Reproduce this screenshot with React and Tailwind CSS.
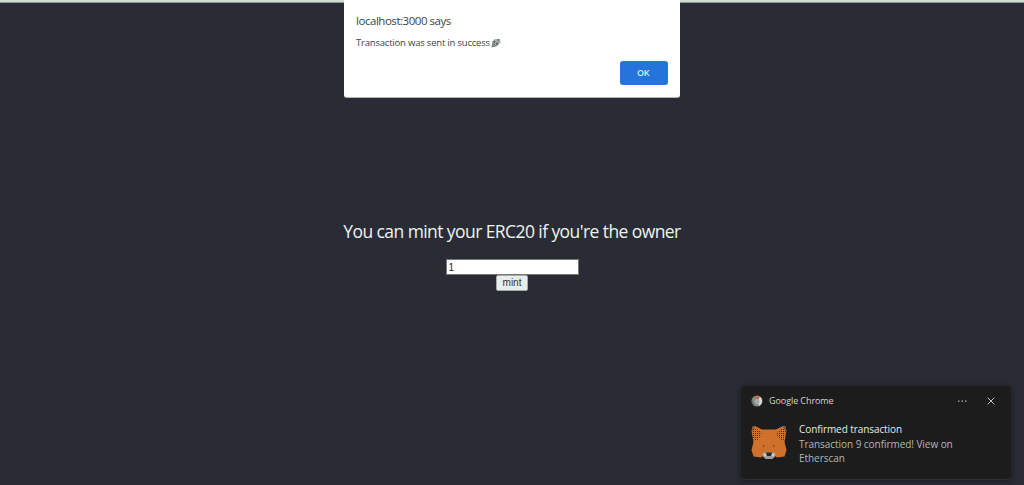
import React from "react";

function PartyPopper() {
  return (
    <svg className="ml-px h-[10px] w-[10px]" viewBox="0 0 10 10" aria-hidden="true">
      <path d="M1.500 3.500 6.500 8 .5 9.500Z" fill="#7b8683" />
      <path d="M1.500 3.500 3 1.200 9 1 9.500 4.500 6.500 8 3.500 6Z" fill="#a4aeaa" />
      <path d="M2 3.200 4.500 3 3.500 5.500ZM4.500 5.500 6.800 4 6.500 7.500ZM6 1.500 8.500 1.300 7.500 3Z" fill="#505a58" />
    </svg>
  );
}

function ChromeMark() {
  return (
    <svg className="h-[12px] w-[12px]" viewBox="0 0 12 12" aria-hidden="true">
      <circle cx="6" cy="6" r="5.500" fill="#858988" />
      <path d="M8.500 1.500A5.500 5.500 0 0 1 8 11L7 7Z" fill="#d5dcd7" />
      <path d="M1 4.500 4 10.800A5.500 5.500 0 0 1 1 4.500Z" fill="#6c706f" />
      <circle cx="6" cy="6.500" r="2.500" fill="#a4aaa7" />
      <path d="M2.800 2.500A5 5 0 0 1 9 1.700L8.200 3.200 7 2.400 6 3.400 5 2.400 4 3.600Z" fill="#c9702f" />
    </svg>
  );
}

function FoxMark() {
  return (
    <svg className="h-[36px] w-[36px]" viewBox="0 0 36 36" aria-hidden="true">
      <defs>
        <pattern id="ear" width="2" height="2" patternUnits="userSpaceOnUse">
          <rect width="1" height="1" fill="#30343a" />
        </pattern>
      </defs>
      <path
        d="M1.500 1H4L11 4.500H25L32 1H34.500L35.500 6 34 14.500 33.500 17 35.500 25 33.500 31.500 26 32.500 24 31H12L10 32.500 2.500 31.500 .5 25 2.500 17 2 14.500 .5 6Z"
        fill="#cf712b"
      />
      <path d="M1.500 1.500 8.500 5.500 11 9 6 16 2.500 14.500 1 7Z" fill="url(#ear)" />
      <path d="M34.500 1.500 27.500 5.500 25 9 30 16 33.500 14.500 35 7Z" fill="url(#ear)" />
      <path d="M1.500 1 4 1.300 2.500 4 1 7ZM34.500 1 32 1.300 33.500 4 35 7Z" fill="#5d5654" />
      <path d="M12 28 14 27.500H22L24 28 24.500 31 21.500 34H14.500L11.500 31Z" fill="#9b9e9a" />
      <path d="M12 28.500H15L15.500 31 13.500 31.500ZM24 28.500H21L20.500 31 22.500 31.500Z" fill="#c9cec7" />
      <path d="M15 27.500H21L20 31H16Z" fill="#24282a" />
      <path d="M12 20.500h1.200v1H12ZM22 20.500h1.200v1H22Z" fill="#30251f" />
    </svg>
  );
}

function BrowserDialog() {
  return (
    <section
      role="dialog"
      className="absolute top-0 left-[344px] flex h-[98px] w-[336px] flex-col rounded-b-[3px] border-b border-[#aeb5b2] bg-white px-3 pt-[13px] text-[#3c4644]"
    >
      <h1 className="text-[11.500px] leading-4 tracking-[-0.460px] whitespace-nowrap">localhost:3000 says</h1>
      <p className="mt-[6px] flex items-center text-[9.500px] leading-[15px] tracking-[-0.200px] whitespace-nowrap">
        <span>Transaction was sent in success</span>
        <PartyPopper />
      </p>
      <button className="mt-[11px] h-6 w-12 self-end rounded-[3px] bg-[#2474dc] pr-[2px] text-[9px] leading-6 font-semibold tracking-[-0.300px] text-[#dce9ef]">
        OK
      </button>
    </section>
  );
}

function Toast() {
  return (
    <aside className="absolute top-[385px] left-[740px] h-[95px] w-[272px] rounded-[6px] border border-[#23262b] border-b-[#303134] bg-[#1c1c1c] text-[#d2d7d4] shadow-[0_1px_5px_#17191e]">
      <header className="flex h-[30px] items-center pl-[10px]">
        <ChromeMark />
        <span className="ml-[6px] w-[188px] text-[9px] leading-3 tracking-[-0.080px] whitespace-nowrap">Google Chrome</span>
        <svg className="h-2 w-[11px]" viewBox="0 0 11 8" fill="#aab0ad">
          <path d="M1 3.500h1.500v1.200H1ZM4.500 3.500H6v1.200H4.500ZM8 3.500h1.500v1.200H8Z" />
        </svg>
        <svg className="ml-[19px] h-2 w-2" viewBox="0 0 8 8" fill="none" stroke="#c4c9c6">
          <path d="m.7.7 6.600 6.600m0-6.600L.7 7.300" />
        </svg>
      </header>
      <div className="flex pl-[10px]">
        <div className="mt-[9px]">
          <FoxMark />
        </div>
        <div className="ml-3 pt-[6px] text-[10px] leading-[14px] whitespace-nowrap">
          <h2 className="tracking-[-0.080px] text-[#e6ebe7]">Confirmed transaction</h2>
          <p className="mt-px tracking-[-0.050px] text-[#b2b7b5]">
            Transaction 9 confirmed! View on
            <br />
            Etherscan
          </p>
        </div>
      </div>
    </aside>
  );
}

export default function App() {
  return (
    <div className="relative h-[485px] w-[1024px] overflow-hidden bg-[#2a2c35] font-['Open_Sans','Noto_Sans',sans-serif]">
      <div className="h-[3px] border-b border-[#8b9491] bg-[#d0dbd2]" />
      <main className="flex flex-col items-center pt-[216px]">
        <p className="text-[17.500px] leading-6 tracking-[-0.580px] whitespace-nowrap text-[#eef3ed]">
          You can mint your ERC20 if you're the owner
        </p>
        <input
          defaultValue="1"
          className="mt-[16px] h-4 w-[133px] border border-[#737875] bg-white pl-[2px] font-['Liberation_Sans',sans-serif] text-[10px] leading-3 text-[#222826] outline-none"
        />
        <button className="h-4 w-[32px] rounded-[2px] border border-[#a5aba8] bg-[#e7edea] font-['Liberation_Sans',sans-serif] text-[10px] leading-3 text-[#303836]">
          mint
        </button>
      </main>
      <BrowserDialog />
      <Toast />
    </div>
  );
}
